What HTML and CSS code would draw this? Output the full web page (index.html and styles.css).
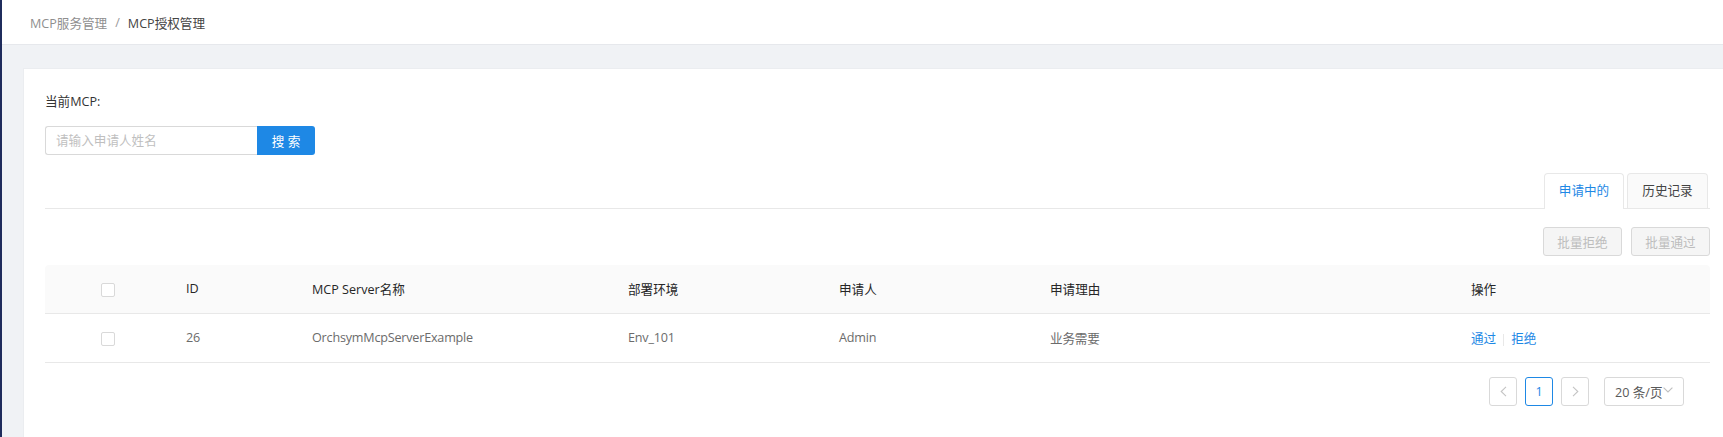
FILE: index.html
```html
<!DOCTYPE html>
<html lang="zh-CN">
<head>
<meta charset="utf-8">
<title>MCP授权管理</title>
<link rel="stylesheet" href="styles.css">
</head>
<body>
<div class="app">
  <div class="side-edge"></div>
  <div class="main">
    <header class="topbar">
      <span class="crumb crumb-parent">MCP服务管理</span>
      <span class="crumb-sep">/</span>
      <span class="crumb crumb-current">MCP授权管理</span>
    </header>
    <div class="content">
      <section class="card">
        <div class="current-label">当前MCP:</div>
        <div class="search-row">
          <input class="search-input" type="text" placeholder="请输入申请人姓名">
          <button class="search-btn">搜 索</button>
        </div>
        <div class="tabs">
          <div class="tab tab-active">申请中的</div>
          <div class="tab">历史记录</div>
        </div>
        <div class="batch-row">
          <button class="btn-disabled">批量拒绝</button>
          <button class="btn-disabled">批量通过</button>
        </div>
        <table class="grid">
          <colgroup>
            <col class="c-check">
            <col class="c-id">
            <col class="c-name">
            <col class="c-env">
            <col class="c-user">
            <col class="c-reason">
            <col class="c-op">
          </colgroup>
          <thead>
            <tr>
              <th class="cell-check"><span class="checkbox"></span></th>
              <th>ID</th>
              <th>MCP Server名称</th>
              <th>部署环境</th>
              <th>申请人</th>
              <th>申请理由</th>
              <th>操作</th>
            </tr>
          </thead>
          <tbody>
            <tr>
              <td class="cell-check"><span class="checkbox"></span></td>
              <td>26</td>
              <td>OrchsymMcpServerExample</td>
              <td>Env_101</td>
              <td>Admin</td>
              <td>业务需要</td>
              <td><span class="op-link">通过</span><span class="op-divider"></span><span class="op-link">拒绝</span></td>
            </tr>
          </tbody>
        </table>
        <div class="pager">
          <span class="page-btn page-arrow">
            <svg width="7" height="11" viewBox="0 0 7 11"><path d="M6 0.8 L1.2 5.5 L6 10.2" fill="none" stroke="#c4c4c4" stroke-width="1.1"/></svg>
          </span>
          <span class="page-btn page-active">1</span>
          <span class="page-btn page-arrow">
            <svg width="7" height="11" viewBox="0 0 7 11"><path d="M1 0.8 L5.8 5.5 L1 10.2" fill="none" stroke="#c4c4c4" stroke-width="1.1"/></svg>
          </span>
          <span class="page-size">20 条/页<svg class="size-caret" width="10" height="6" viewBox="0 0 10 6"><path d="M0.6 0.6 L5 5 L9.4 0.6" fill="none" stroke="#bfbfbf" stroke-width="1.1"/></svg></span>
        </div>
      </section>
    </div>
  </div>
</div>
</body>
</html>
```

FILE: styles.css
```css
* { box-sizing: border-box; }
html, body {
  margin: 0;
  padding: 0;
  width: 1723px;
  height: 437px;
  overflow: hidden;
  background: #f0f2f5;
  font-family: "Open Sans", "Noto Sans CJK SC", sans-serif;
  font-size: 12.6px;
  color: #666;
}
.app {
  display: flex;
  height: 437px;
  overflow: hidden;
}
.side-edge {
  width: 2px;
  flex: none;
  background: #1f2c5c;
}
.main {
  flex: 1;
  min-width: 0;
  display: flex;
  flex-direction: column;
}
.topbar {
  flex: none;
  height: 45px;
  background: #fff;
  border-bottom: 1px solid #e6e8ec;
  padding-left: 28px;
  display: flex;
  align-items: center;
  font-size: 12.6px;
}
.crumb-parent { color: #8f8f8f; }
.crumb-sep { color: #9a9a9a; margin: 0 8px; }
.crumb-current { color: #444; }
.content {
  flex: none;
  padding: 23px 0 0 21px;
}
.card {
  width: 1709px;
  background: #fff;
  border: 1px solid #ebedf0;
  padding: 23px 21px 60px 21px;
}
.current-label {
  height: 20px;
  line-height: 20px;
  color: #333;
}
.search-row {
  display: flex;
  margin-top: 14px;
}
.search-input {
  width: 212px;
  height: 29px;
  border: 1px solid #d9d9d9;
  border-right: none;
  border-radius: 3px 0 0 3px;
  padding: 0 10px;
  font-family: inherit;
  font-size: 12.6px;
  color: #333;
  outline: none;
}
.search-input::placeholder { color: #bfbfbf; }
.search-btn {
  width: 58px;
  height: 29px;
  border: none;
  border-radius: 0 3px 3px 0;
  background: #1e88e5;
  color: #fff;
  font-family: inherit;
  font-size: 12.6px;
  padding: 0;
}
.tabs {
  margin-top: 18px;
  display: flex;
  justify-content: flex-end;
  gap: 3px;
  border-bottom: 1px solid #e8e8e8;
  padding-right: 2px;
}
.tab {
  height: 35px;
  width: 81px;
  line-height: 34px;
  text-align: center;
  border: 1px solid #e8e8e8;
  border-bottom: none;
  border-radius: 4px 4px 0 0;
  background: #fafafa;
  color: #444;
  margin-bottom: -1px;
}
.tab-active {
  width: 80px;
  background: #fff;
  color: #1e88e5;
  height: 36px;
}
.batch-row {
  margin-top: 18px;
  display: flex;
  justify-content: flex-end;
  gap: 9px;
}
.btn-disabled {
  width: 79px;
  height: 29px;
  border: 1px solid #d9d9d9;
  border-radius: 3px;
  background: #f5f5f5;
  color: #bdbdbd;
  font-family: inherit;
  font-size: 12.6px;
  padding: 0;
}
.grid {
  margin-top: 9px;
  width: 1665px;
  border-collapse: collapse;
  table-layout: fixed;
}
.c-check { width: 126px; }
.c-id { width: 126px; }
.c-name { width: 316px; }
.c-env { width: 211px; }
.c-user { width: 211px; }
.c-reason { width: 421px; }
.c-op { width: 254px; }
.grid th {
  height: 48px;
  background: #fafafa;
  border-bottom: 1px solid #e8e8e8;
  text-align: left;
  font-weight: normal;
  color: #262626;
  padding: 0 15px;
}
.grid thead tr th:first-child { border-top-left-radius: 4px; }
.grid thead tr th:last-child { border-top-right-radius: 4px; }
.grid td {
  height: 49px;
  border-bottom: 1px solid #e8e8e8;
  padding: 0 15px;
  color: #6b6b6b;
  letter-spacing: -0.2px;
}
.grid .cell-check {
  text-align: center;
  padding: 0;
}
.checkbox {
  display: inline-block;
  width: 14px;
  height: 14px;
  border: 1px solid #d9d9d9;
  border-radius: 2px;
  background: #fff;
  vertical-align: middle;
}
.op-link { color: #1e88e5; letter-spacing: 0; }
.op-divider {
  display: inline-block;
  width: 1px;
  height: 12px;
  background: #e8e8e8;
  margin: 0 7px;
  vertical-align: middle;
}
.pager {
  margin-top: 14px;
  display: flex;
  justify-content: flex-end;
  align-items: center;
  gap: 8px;
  padding-right: 26px;
}
.page-btn {
  width: 28px;
  height: 29px;
  border: 1px solid #d9d9d9;
  border-radius: 3px;
  display: flex;
  align-items: center;
  justify-content: center;
  color: #595959;
}
.page-active {
  border-color: #1e88e5;
  color: #1e88e5;
}
.page-size {
  margin-left: 7px;
  width: 80px;
  height: 29px;
  border: 1px solid #d9d9d9;
  border-radius: 3px;
  display: flex;
  align-items: center;
  padding-left: 10px;
  color: #595959;
}
.size-caret {
  margin-left: 1px;
  margin-top: -2px;
}
```
